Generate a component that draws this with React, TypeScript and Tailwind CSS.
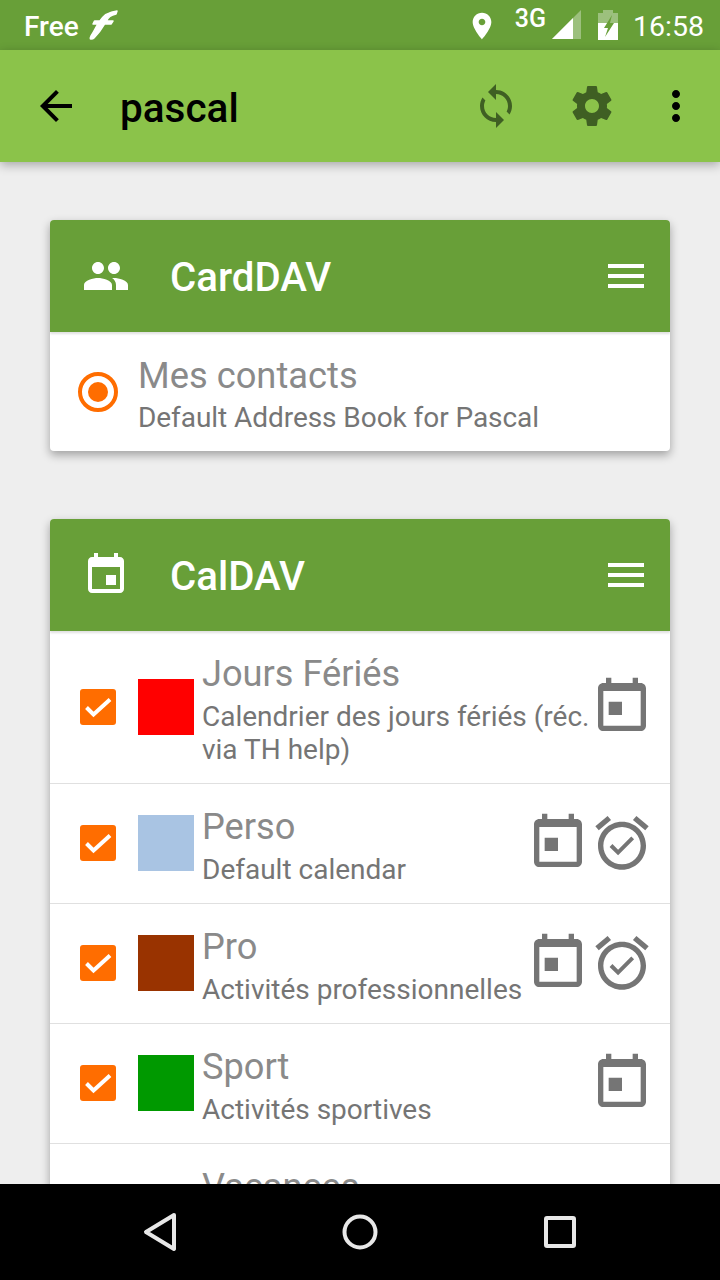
import * as React from "react";

const ROBOTO = "font-['Roboto',sans-serif]";

function Icon({ d, size = 48, className }: { d: string; size?: number; className?: string }) {
  return (
    <svg width={size} height={size} viewBox="0 0 24 24" fill="currentColor" className={className}>
      <path d={d} />
    </svg>
  );
}

const ICONS = {
  back: "M20 11H7.83l5.59-5.59L12 4l-8 8 8 8 1.41-1.41L7.83 13H20v-2z",
  sync: "M12 4V1L8 5l4 4V6c3.31 0 6 2.69 6 6 0 1.01-.25 1.97-.7 2.8l1.46 1.46C19.54 15.03 20 13.57 20 12c0-4.42-3.58-8-8-8zm0 14c-3.31 0-6-2.69-6-6 0-1.01.25-1.97.7-2.8L5.24 7.74C4.46 8.97 4 10.43 4 12c0 4.42 3.58 8 8 8v3l4-4-4-4v3z",
  gear: "M19.43 12.98c.04-.32.07-.64.07-.98s-.03-.66-.07-.98l2.11-1.65c.19-.15.24-.42.12-.64l-2-3.46c-.12-.22-.39-.3-.61-.22l-2.49 1c-.52-.4-1.08-.73-1.69-.98l-.38-2.65C14.46 2.18 14.25 2 14 2h-4c-.25 0-.46.18-.49.42l-.38 2.65c-.61.25-1.17.59-1.69.98l-2.49-1c-.23-.09-.49 0-.61.22l-2 3.46c-.13.22-.07.49.12.64l2.11 1.65c-.04.32-.07.65-.07.98s.03.66.07.98l-2.11 1.65c-.19.15-.24.42-.12.64l2 3.46c.12.22.39.3.61.22l2.49-1c.52.4 1.08.73 1.69.98l.38 2.65c.03.24.24.42.49.42h4c.25 0 .46-.18.49-.42l.38-2.65c.61-.25 1.17-.59 1.69-.98l2.49 1c.23.09.49 0 .61-.22l2-3.46c.12-.22.07-.49-.12-.64l-2.11-1.65zM12 15.5c-1.93 0-3.5-1.57-3.5-3.5s1.57-3.5 3.5-3.5 3.5 1.57 3.5 3.5-1.57 3.5-3.5 3.5z",
  more: "M12 8c1.1 0 2-.9 2-2s-.9-2-2-2-2 .9-2 2 .9 2 2 2zm0 2c-1.1 0-2 .9-2 2s.9 2 2 2 2-.9 2-2-.9-2-2-2zm0 6c-1.1 0-2 .9-2 2s.9 2 2 2 2-.9 2-2-.9-2-2-2z",
  group: "M16 11c1.66 0 2.99-1.34 2.99-3S17.66 5 16 5c-1.66 0-3 1.34-3 3s1.34 3 3 3zm-8 0c1.66 0 2.99-1.34 2.99-3S9.66 5 8 5C6.34 5 5 6.34 5 8s1.34 3 3 3zm0 2c-2.33 0-7 1.17-7 3.5V19h14v-2.5c0-2.33-4.67-3.5-7-3.5zm8 0c-.29 0-.62.02-.97.05 1.16.84 1.97 1.97 1.97 3.45V19h6v-2.5c0-2.33-4.67-3.5-7-3.5z",
  event: "M17 12h-5v5h5v-5zM16 1v2H8V1H6v2H5c-1.11 0-1.99.9-1.99 2L3 19c0 1.1.89 2 2 2h14c1.1 0 2-.9 2-2V5c0-1.1-.9-2-2-2h-1V1h-2zm3 18H5V8h14v11z",
  eventLeft: "M12 10H7v5h5v-5zM16 1v2H8V1H6v2H5c-1.11 0-1.99.9-1.99 2L3 19c0 1.1.89 2 2 2h14c1.1 0 2-.9 2-2V5c0-1.1-.9-2-2-2h-1V1h-2zm3 18H5V6h14v13z",
  alarm: "M7.88 3.39L6.6 1.86 2 5.71l1.29 1.53 4.59-3.85zM22 5.72l-4.6-3.86-1.29 1.53 4.6 3.86L22 5.72zM12 4c-4.97 0-9 4.03-9 9s4.02 9 9 9c4.97 0 9-4.03 9-9s-4.03-9-9-9zm0 16c-3.86 0-7-3.14-7-7s3.14-7 7-7 7 3.14 7 7-3.14 7-7 7zm-1.46-5.47L8.41 12.4l-1.06 1.06 3.18 3.18 6-6-1.06-1.06-4.93 4.95z",
  place: "M12 2C8.13 2 5 5.13 5 9c0 5.25 7 13 7 13s7-7.75 7-13c0-3.87-3.13-7-7-7zm0 9.5c-1.38 0-2.5-1.12-2.5-2.5s1.12-2.5 2.5-2.5 2.5 1.12 2.5 2.5-1.12 2.5-2.5 2.5z",
  menu: "M3 18h18v-2H3v2zm0-5h18v-2H3v2zm0-7v2h18V6H3z",
};

function StatusBar() {
  return (
    <div className="flex h-[50px] shrink-0 items-center bg-[#689f38] text-white">
      <span className="ml-[24px] pt-[4px] text-[28px] font-medium leading-none">Free</span>
      <svg width="32" height="32" viewBox="0 0 32 32" className="ml-[9px]" fill="white" stroke="white" strokeWidth="1.500" strokeLinejoin="round">
        <path d="M3 30C2 30 2 29 3 27C6 22 8 18 10 15L5 15L6.500 12L12 12C15 7 20 3 29 2L28 5C23 6 20 8 18.500 12L25 12L23 15L16.500 15C13 21 9 26 6 29C5 30 4 30 3 30Z" />
      </svg>
      <div className="flex-1" />
      <Icon d={ICONS.place} size={32} className="mt-[1px]" />
      <span className="ml-[17px] mb-[13px] text-[25px] font-medium leading-none">3G</span>
      <svg width="32" height="32" viewBox="0 0 32 32" className="ml-[4px]">
        <path d="M2 30 L31 1 V30 Z" fill="white" fillOpacity="0.35" />
        <path d="M2 30 L23 9 V30 Z" fill="white" />
      </svg>
      <svg width="22" height="32" viewBox="0 0 22 32" className="ml-[15px]">
        <path d="M6 1h10v3h5v27H1V4h5z" fill="white" fillOpacity="0.35" />
        <path d="M1 14h20v17H1z" fill="white" />
        <path d="M15 6 L7 19h4l-3 9 9-14h-4z" fill="#689f38" />
      </svg>
      <span className="ml-[14px] mr-[16px] pt-[4px] text-[28.5px] leading-none">16:58</span>
    </div>
  );
}

function Toolbar() {
  return (
    <div className="relative z-10 flex h-[112px] shrink-0 items-center bg-[#8bc34a] pl-[32px] pr-[20px] shadow-[0_3px_10px_rgba(0,0,0,0.3)]">
      <Icon d={ICONS.back} className="text-black" />
      <span className="ml-[40px] flex-1 pt-[4px] text-[40.5px] font-medium leading-none text-black">pascal</span>
      <Icon d={ICONS.sync} className="text-[#3f5f23]" />
      <Icon d={ICONS.gear} className="ml-[48px] text-[#3f5f23]" />
      <Icon d={ICONS.more} className="ml-[36px] text-black" />
    </div>
  );
}

function CardHeader({ icon, title }: { icon: string; title: string }) {
  return (
    <div className="flex h-[112px] items-center bg-[#689f38] pl-[32px] pr-[20px] text-white shadow-[0_2px_2px_rgba(0,0,0,0.12)]">
      <Icon d={icon} />
      <span className="ml-[40px] flex-1 pt-[4px] text-[40.2px] font-medium leading-none">{title}</span>
      <Icon d={ICONS.menu} />
    </div>
  );
}

function CheckBox() {
  return (
    <div className="flex h-[36px] w-[36px] shrink-0 items-center justify-center rounded-[3px] bg-[#ff6d00]">
      <svg width="36" height="36" viewBox="0 0 36 36" fill="none" stroke="white" strokeWidth="4">
        <path d="M6.500 18.500L13.500 25.500L30 10.500" />
      </svg>
    </div>
  );
}

type Row = {
  color: string;
  title: string;
  sub: string;
  alarm?: boolean;
  height: string;
  textPad: string;
};

const ROWS: Row[] = [
  { color: "bg-[#ff0000]", title: "Jours Fériés", sub: "Calendrier des jours fériés (réc. via TH help)", height: "h-[153px]", textPad: "pt-[4px]" },
  { color: "bg-[#a9c4e3]", title: "Perso", sub: "Default calendar", alarm: true, height: "h-[120px] pb-[1px]", textPad: "pt-[6px]" },
  { color: "bg-[#993300]", title: "Pro", sub: "Activités professionnelles", alarm: true, height: "h-[120px] pb-[1px]", textPad: "pt-[6px]" },
  { color: "bg-[#009900]", title: "Sport", sub: "Activités sportives", height: "h-[120px] pb-[1px]", textPad: "pt-[6px]" },
];

function CalendarRow({ row }: { row: Row }) {
  return (
    <div className={`flex items-center border-b border-[#e0e0e0] pl-[30px] pr-[16px] ${row.height}`}>
      <CheckBox />
      <div className={`ml-[22px] h-[56px] w-[56px] shrink-0 ${row.color}`} />
      <div className={`ml-[8px] min-w-0 flex-1 ${row.textPad}`}>
        <div className="text-[36.2px] leading-[42px] text-[#8a8a8a]">{row.title}</div>
        <div className="mt-[5px] text-[28px] leading-[33px] text-[#757575]">{row.sub}</div>
      </div>
      <div className="flex shrink-0 text-[#757575]">
        <Icon d={ICONS.eventLeft} size={64} />
        {row.alarm && <Icon d={ICONS.alarm} size={64} />}
      </div>
    </div>
  );
}

function NavBar() {
  return (
    <div className="relative z-10 flex h-[96px] shrink-0 items-center bg-black">
      <svg width="720" height="96" viewBox="0 0 720 96" fill="none" stroke="#e8e8e8" strokeWidth="4" strokeLinejoin="round">
        <path d="M174 31 L146 48 L174 65 Z" />
        <circle cx="360" cy="48" r="15.500" />
        <rect x="546" y="34" width="28" height="28" rx="1" />
      </svg>
    </div>
  );
}

export default function App() {
  return (
    <div className={`flex h-[1280px] w-[720px] flex-col overflow-hidden bg-[#eeeeee] ${ROBOTO}`}>
      <StatusBar />
      <Toolbar />
      <div className="min-h-0 flex-1 overflow-hidden px-[50px] pt-[58px]">
        <div className="overflow-hidden rounded-[4px] bg-white shadow-[0_4px_10px_rgba(0,0,0,0.33)]">
          <CardHeader icon={ICONS.group} title="CardDAV" />
          <div className="flex h-[119px] items-center pl-[28px]">
            <div className="flex h-[40px] w-[40px] items-center justify-center rounded-full border-[4px] border-[#ff6d00]">
              <div className="h-[20px] w-[20px] rounded-full bg-[#ff6d00]" />
            </div>
            <div className="ml-[20px] pt-[6px]">
              <div className="text-[36.3px] leading-[42px] text-[#8a8a8a]">Mes contacts</div>
              <div className="mt-[4px] text-[28px] leading-[33px] tracking-[-0.06px] text-[#757575]">Default Address Book for Pascal</div>
            </div>
          </div>
        </div>
        <div className="mt-[68px] overflow-hidden rounded-t-[4px] bg-white shadow-[0_4px_10px_rgba(0,0,0,0.33)]">
          <CardHeader icon={ICONS.event} title="CalDAV" />
          {ROWS.map((row) => (
            <CalendarRow key={row.title} row={row} />
          ))}
          <div className="h-[120px] pl-[152px] pt-[22px] text-[36.2px] leading-[42px] text-[#8a8a8a]">Vacances</div>
        </div>
      </div>
      <NavBar />
    </div>
  );
}
